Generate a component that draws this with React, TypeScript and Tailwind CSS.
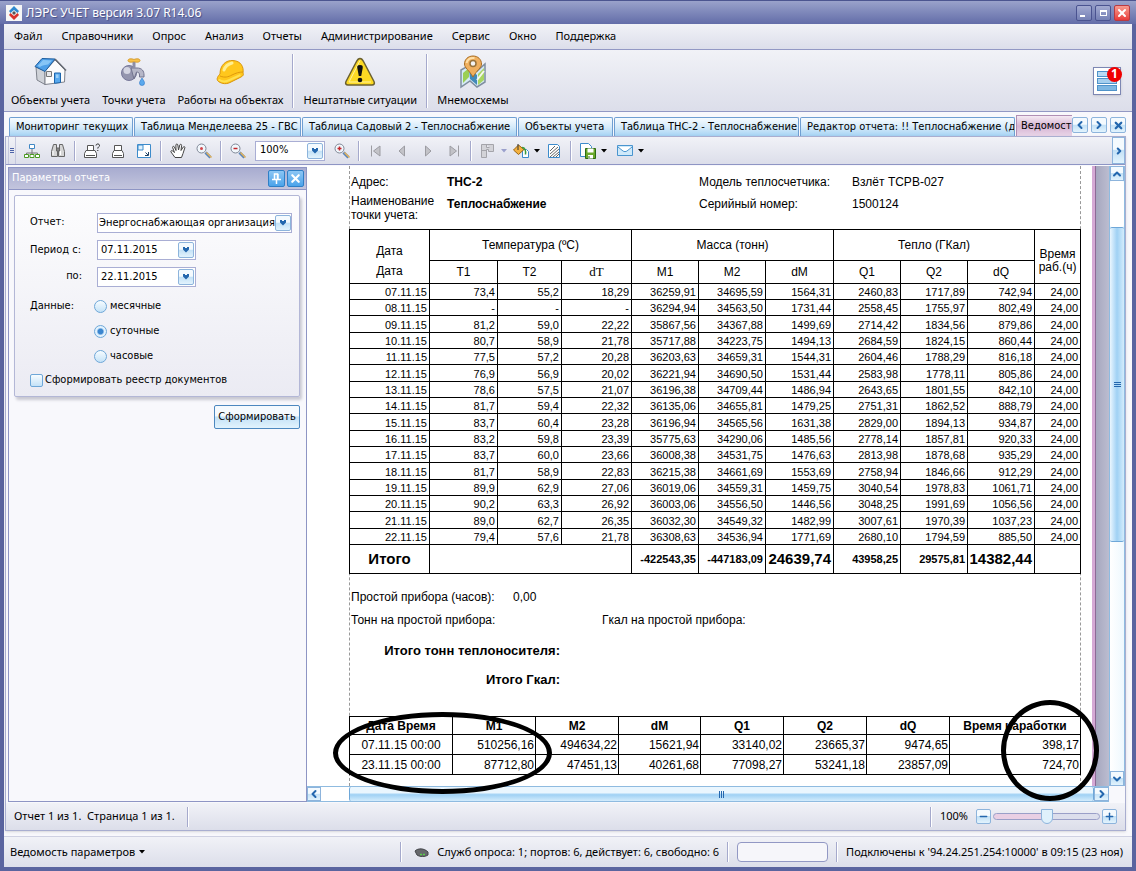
import type { ReactNode } from "react";
import { ChevronLeft, ChevronRight, ChevronUp, ChevronDown, X, Minus, Plus } from "lucide-react";

const menu = ["Файл", "Справочники", "Опрос", "Анализ", "Отчеты", "Администрирование", "Сервис", "Окно", "Поддержка"];

const tabs = [
  { title: "Мониторинг текущих", width: "w-[124px]" },
  { title: "Таблица Менделеева 25 - ГВС", width: "w-[167px]" },
  { title: "Таблица Садовый 2 - Теплоснабжение", width: "w-[215px]" },
  { title: "Объекты учета", width: "w-[95px]" },
  { title: "Таблица ТНС-2 - Теплоснабжение", width: "w-[185px]" },
  { title: "Редактор отчета: !! Теплоснабжение (д", width: "w-[215px]" },
];

const rows = [
  "07.11.15 73,4 55,2 18,29 36259,91 34695,59 1564,31 2460,83 1717,89 742,94 24,00",
  "08.11.15 - - - 36294,94 34563,50 1731,44 2558,45 1755,97 802,49 24,00",
  "09.11.15 81,2 59,0 22,22 35867,56 34367,88 1499,69 2714,42 1834,56 879,86 24,00",
  "10.11.15 80,7 58,9 21,78 35717,88 34223,75 1494,13 2684,59 1824,15 860,44 24,00",
  "11.11.15 77,5 57,2 20,28 36203,63 34659,31 1544,31 2604,46 1788,29 816,18 24,00",
  "12.11.15 76,9 56,9 20,02 36221,94 34690,50 1531,44 2583,98 1778,11 805,86 24,00",
  "13.11.15 78,6 57,5 21,07 36196,38 34709,44 1486,94 2643,65 1801,55 842,10 24,00",
  "14.11.15 81,7 59,4 22,32 36135,06 34655,81 1479,25 2751,31 1862,52 888,79 24,00",
  "15.11.15 83,7 60,4 23,28 36196,94 34565,56 1631,38 2829,00 1894,13 934,87 24,00",
  "16.11.15 83,2 59,8 23,39 35775,63 34290,06 1485,56 2778,14 1857,81 920,33 24,00",
  "17.11.15 83,7 60,0 23,66 36008,38 34531,75 1476,63 2813,98 1878,68 935,29 24,00",
  "18.11.15 81,7 58,9 22,83 36215,38 34661,69 1553,69 2758,94 1846,66 912,29 24,00",
  "19.11.15 89,9 62,9 27,06 36019,06 34559,31 1459,75 3040,54 1978,83 1061,71 24,00",
  "20.11.15 90,2 63,3 26,92 36003,06 34556,50 1446,56 3048,25 1991,69 1056,56 24,00",
  "21.11.15 89,0 62,7 26,35 36032,30 34549,32 1482,99 3007,61 1970,39 1037,23 24,00",
  "22.11.15 79,4 57,6 21,78 36308,63 34536,94 1771,69 2680,10 1794,59 885,50 24,00",
].map((line) => line.split(" "));

const counters = [
  ["07.11.15 00:00", "510256,16", "494634,22", "15621,94", "33140,02", "23665,37", "9474,65", "398,17"],
  ["23.11.15 00:00", "87712,80", "47451,13", "40261,68", "77098,27", "53241,18", "23857,09", "724,70"],
];

const bar = "bg-linear-to-b from-[#f1f2f7] to-[#dcdeea]";
const glass = "border border-[#8db4dc] bg-linear-to-b from-[#f4fafe] from-45% via-[#c3e1f6] via-50% to-[#e2f3fd] text-[#2467ae]";
const uiFont = "font-['Noto_Sans',sans-serif] text-[11px]";
const formFont = "font-['DejaVu_Sans_Condensed','DejaVu_Sans',sans-serif] text-[11px]";

function HouseIcon() {
  return (
    <svg width="34" height="30" viewBox="0 0 34 30">
      <path d="m2 10 9 4v13.500L3 23Z" fill="#cfd2d8" stroke="#7e828c" />
      <path d="M11 14 21 3l10 10-.5 12L11 27.500Z" fill="#fbfbfc" stroke="#7e828c" />
      <path d="M1 9.500 8 1.500l13 .5-10 12.500Z" fill="#4d9fe8" stroke="#1d5d9e" />
      <path d="m3.500 9 5.500-6 9 .5-4 4C10 8 7 9 6 10Z" fill="#86c5f6" />
      <path d="m21 2 11 11.500" stroke="#656972" strokeWidth="1.500" />
      <path d="M12.500 14.500h5v5h-5z" fill="#e8e9ec" stroke="#777" />
      <path d="M20.500 16h6v9.500l-6 .8Z" fill="#58a9ee" stroke="#1d65ac" />
      <path d="M22 17.500h2.500V21H22z" fill="#9dd0f8" />
    </svg>
  );
}

function TapIcon() {
  return (
    <svg width="28" height="30" viewBox="0 0 28 30">
      <circle cx="9" cy="16" r="7.500" fill="#9495ae" stroke="#77789a" />
      <circle cx="7" cy="13.500" r="3.500" fill="#d4d5e2" />
      <path d="M11 11h6c5 0 7 3 7 7v2h-4.500v-2c0-2-1-3-3-3L14 22Z" fill="#b6b7c8" stroke="#73748f" />
      <path d="M12.500 5h3v6h-3z" fill="#8d8ea6" />
      <path d="M8 3.500c0-2 4-2 6-1 2-1 6-1 6 1s-4 2-6 1c-2 1-6 1-6-1Z" fill="#f8c24a" stroke="#d59a2a" />
      <path d="M22 21c2 3 2.500 4 2.500 5a2.500 2.500 0 0 1-5 0c0-1 .5-2 2.500-5Z" fill="#5aa9ee" stroke="#2a76c6" strokeWidth=".6" />
    </svg>
  );
}

function HelmetIcon() {
  return (
    <svg width="30" height="26" viewBox="0 0 30 26">
      <path d="M4 15C4 6 10 1 17 1.500 25 2 28 8 27 14c1 2 0 3-3 4.500l-10 5C9 26 4 24 2 22c-2-2 0-5 2-7Z" fill="#ffc71c" stroke="#d9960c" />
      <path d="M4 17c5 2 8 1 12-1s7-3 11-3" fill="none" stroke="#e09a0c" />
      <path d="M8 11c1-3 4-6 8-7" fill="none" stroke="#ffee90" strokeWidth="3" strokeLinecap="round" />
      <path d="M2.500 20.500c4 3 8 2 11 .5l11-5" fill="none" stroke="#ffe050" strokeWidth="2" />
    </svg>
  );
}

function WarningIcon() {
  return (
    <svg width="32" height="30" viewBox="0 0 32 30">
      <path d="M16 1.500c2 0 2.500 1 3.500 3l10.500 20c1 2 0 3.500-2 3.500H4c-2 0-3-1.500-2-3.500L12.500 4.500c1-2 1.500-3 3.500-3Z" fill="#fcd923" stroke="#6b6030" strokeWidth="1.500" />
      <path d="M16 3.500 5 25h22" fill="none" stroke="#fff3a0" />
      <path d="M16 8c2.500 0 3 1 2.700 3l-1.500 8h-2.400l-1.500-8c-.3-2 .2-3 2.700-3Z" fill="#111" />
      <circle cx="16" cy="23" r="2.300" fill="#111" />
    </svg>
  );
}

function MapIcon() {
  return (
    <svg width="28" height="34" viewBox="0 0 28 34">
      <path d="m2 15 7-4 9 5 8-7v18l-8 5-7-6-9 6Z" fill="#d5eaf5" stroke="#7f8ea0" strokeWidth="1.500" />
      <path d="m4 18 6-5v9l-6 6Z" fill="#9bcf54" />
      <path d="m10 14 8 6v10l-7-6Z" fill="#4289b8" />
      <path d="m19 19 6-6v12l-6 5Z" fill="#a8d661" />
      <path d="m18 25 7-9" stroke="#f6f7ef" strokeWidth="2" />
      <path d="M14 1c5 0 8.500 3.500 8.500 8 0 4-4.500 6-8.500 13C10 15 5.500 13 5.500 9c0-4.500 3.500-8 8.500-8Z" fill="#efaf5f" stroke="#a96d23" />
      <path d="M7.500 8c1-4 4-5.500 8-5" fill="none" stroke="#ffdfa6" strokeWidth="2" />
      <circle cx="14" cy="8.500" r="3" fill="#f4f4f4" stroke="#98733b" strokeWidth="1.500" />
    </svg>
  );
}

const glyphs: Record<string, ReactNode> = {
  tree: (
    <g fill="#fff">
      <path d="M8 6v4M2.500 12v-2h11v2M8 10v2" fill="none" stroke="#777" />
      <path d="M5.500 1.500h5v4h-5z" stroke="#3f87c4" />
      <path d="M.5 11.500h4v3h-4zM6 11.500h4v3H6zM11.500 11.500h4v3h-4z" stroke="#4b9a22" />
    </g>
  ),
  find: (
    <g fill="#d5d5d5" stroke="#666">
      <path d="M3.500 1.500h3v4l1 2v6h-6v-5ZM9.500 1.500h3l2 7v5h-6v-6l1-2Z" />
      <path d="M6.500 5h3v3h-3z" fill="#888" />
      <path d="M3 8v4M10.500 8v4" stroke="#fff" />
    </g>
  ),
  printAsk: (
    <g fill="#fff" stroke="#555">
      <path d="M3.500 7.500v-5h6v5" />
      <path d="M.5 10.500 2 7.500h9l1.500 3v4H.5ZM2 12.500h9" />
      <path d="M12 2.500c0-2 3.500-2 3.500 0 0 1.500-1.700 1.300-1.700 3M13.800 7v1" fill="none" stroke="#222" />
    </g>
  ),
  print: (
    <g fill="#fff" stroke="#555">
      <path d="M4.500 7.500v-5h7v5" />
      <path d="M2.500 10.500 4 7.500h8l1.500 3v4h-11ZM4 12.500h8" />
    </g>
  ),
  scale: (
    <g fill="#fff" stroke="#3c8bcb">
      <path d="M1.500 1.500h13v13h-13z" />
      <path d="M2 2h5v5H2z" fill="#dff1fd" />
      <path d="M9.500 9.500 12 12M12.500 9v3.500H9" stroke="#246" />
    </g>
  ),
  hand: (
    <path d="M5 14.500 1 9c-.5-1 .7-2 1.700-1L4.500 9.500 2.600 4.500c-.3-1.200 1.300-1.700 1.800-.5L6 7.500 5.900 2c0-1.300 1.800-1.300 1.900 0L8.500 7l1.300-5c.3-1.200 2-.8 1.800.4L11 7.500 13.300 4c.7-1 2-.2 1.500.9L13 10.500l-1.500 4Z" fill="#fff" stroke="#444" />
  ),
  zoom: <ZoomGlyph mark="" />,
  zoomOut: <ZoomGlyph mark="M3.500 5.500h4" />,
  zoomIn: <ZoomGlyph mark="M3.500 5.500h4M5.500 3.500v4" />,
  first: <path d="M3.500 2.500v11M12 3v10L5.500 8Z" fill="#c3c3c8" stroke="#9c9ca2" />,
  prev: <path d="M10.500 3v10L5 8Z" fill="#c3c3c8" stroke="#9c9ca2" />,
  next: <path d="M5.500 3v10L11 8Z" fill="#c3c3c8" stroke="#9c9ca2" />,
  last: <path d="M12.500 2.500v11M4 3v10L10.500 8Z" fill="#c3c3c8" stroke="#9c9ca2" />,
  pages: <path d="M1.500 1.500h12v7h-5v-2h-2v8h-5ZM6.500 1.500v3h3M2 7.500h4" fill="#d3d3d8" stroke="#a4a4aa" />,
  fill: (
    <g>
      <path d="M9.500 6.500h4l2 2v6h-6z" fill="#fff" stroke="#3c8bcb" />
      <path d="m.5 7 5-5L11 6.500l-5.500 5Z" fill="#f4b13f" stroke="#9b6512" />
      <path d="M5 1v6" stroke="#333" />
      <path d="M9 4.500c3 0 4 3 3.500 7" fill="none" stroke="#3b9a3b" strokeWidth="1.500" />
    </g>
  ),
  watermark: (
    <g>
      <path d="M2.500 1.500h9l2 2v11h-11z" fill="#fff" stroke="#3c8bcb" />
      <path d="m4 8 5-5M4 11l8-7M4 14l9-8M7 14l6-5M10 14l3-3" stroke="#666" />
    </g>
  ),
  save: (
    <g>
      <path d="M.5.500h8l3 3v10H.5z" fill="#fff" stroke="#3c8bcb" />
      <path d="M5.500 5.500h10v10h-10z" fill="#6aa92c" stroke="#2c6b12" />
      <path d="M7.500 5.500h6v4h-6zM8 12h5v3.500H8z" fill="#fff" />
      <path d="M9 13v2" stroke="#2c6b12" />
    </g>
  ),
  mail: (
    <g>
      <path d="M.5 2.500h15v10H.5z" fill="#cfe9fa" stroke="#4a95cf" />
      <path d="m1 4 5 4c1 .8 3 .8 4 0l5-4" fill="#fff" stroke="#4a95cf" />
    </g>
  ),
};

function ZoomGlyph({ mark }: { mark: string }) {
  return (
    <g fill="none">
      <path d="m9.500 9.500 5 5" stroke="#5b85b8" strokeWidth="3" />
      <path d="m10.500 9.500 5 5" stroke="#e5b35a" strokeWidth="1.500" />
      <circle cx="5.500" cy="5.500" r="4.500" fill="#f1f7fc" stroke="#7f8796" />
      {mark ? <path d={mark} stroke="#c2262b" strokeWidth="1.500" /> : <circle cx="5.500" cy="5.500" r="1.500" fill="#d2474b" />}
    </g>
  );
}

function Tool({ name, label }: { name: string; label: string }) {
  return (
    <button className="flex h-6 w-[26px] shrink-0 items-center justify-center" aria-label={label}>
      <svg width="16" height="16" viewBox="0 0 16 16">{glyphs[name]}</svg>
    </button>
  );
}

function Caret({ muted = false }: { muted?: boolean }) {
  return (
    <svg className="mr-px shrink-0" width="6" height="4" viewBox="0 0 6 4">
      <path d="M0 0h6L3 3.500Z" fill={muted ? "#9aa0cc" : "#000"} />
    </svg>
  );
}

function Sep() {
  return <span className="mx-[3px] h-5 w-[2px] shrink-0 border-l border-[#a5a9cc] bg-white" />;
}

function DropMark() {
  return (
    <span className={`${glass} pointer-events-none flex size-4 shrink-0 items-center justify-center rounded-xs`}>
      <svg width="8" height="6" viewBox="0 0 8 6">
        <path d="M1 0h2v1h2V0h2v2.500L4 5.500 1 2.500Z" fill="currentColor" />
      </svg>
    </span>
  );
}

function PinMark() {
  return (
    <svg width="9" height="11" viewBox="0 0 9 11" fill="none" stroke="#fff">
      <path d="M2.500 6V1h3v5M6 1v5M0 6.500h9M4.500 7v4" strokeWidth="1.500" />
    </svg>
  );
}

function BigButton({ icon, label }: { icon: ReactNode; label: string }) {
  return (
    <button className="flex h-full flex-col items-center justify-between whitespace-nowrap">
      <span className="flex h-9 items-center">{icon}</span>
      <span className="leading-4">{label}</span>
    </button>
  );
}

function TitleBar() {
  return (
    <header className="flex h-6 shrink-0 items-center border-t border-[#4c5590] bg-linear-to-b from-[#9aa2cb] to-[#636da8] px-1.5 font-['Noto_Sans',sans-serif] text-[12px] text-white">
      <svg width="16" height="16" viewBox="0 0 16 16">
        <path d="M0 0h16v16H0z" fill="#f6f6f6" />
        <path d="m8 1 5 5-1.500 2L8 5 4.500 8 3 6Z" fill="#3089cf" />
        <path d="m8 15-5-5 1.500-2L8 11l3.500-3L13 10Z" fill="#d8322c" />
        <path d="m8 6 2 2-2 2-2-2Z" fill="#555" />
      </svg>
      <h1 className="ml-1 flex-1 [text-shadow:1px_1px_1px_#454d85]">ЛЭРС УЧЕТ версия 3.07 R14.06</h1>
      <div className="flex gap-[3px]">
        <button aria-label="Свернуть" className="flex size-4 items-end rounded-xs border border-[#4a5390] bg-linear-to-b from-[#a3aad1] to-[#7580b5] p-[3px]">
          <span className="h-[2px] w-[5px] bg-white" />
        </button>
        <button aria-label="Развернуть" className="flex size-4 items-center justify-center rounded-xs border border-[#4a5390] bg-linear-to-b from-[#a3aad1] to-[#7580b5]">
          <span className="h-[6px] w-[7px] border border-t-2 border-white" />
        </button>
        <button aria-label="Закрыть" className="flex size-4 items-center justify-center rounded-xs border border-[#b93b42] bg-linear-to-b from-[#f79a90] to-[#e8383a]">
          <X size={12} strokeWidth={4} />
        </button>
      </div>
    </header>
  );
}

function TabStrip() {
  return (
    <div className="flex h-[21px] shrink-0 items-end pl-1">
      <div className={`${formFont} flex min-w-0 flex-1 items-end overflow-hidden`}>
        {tabs.map((tab) => (
          <button
            key={tab.title}
            className={`${tab.width} mr-px h-[19px] shrink-0 overflow-hidden rounded-t-xs border border-b-0 border-[#6f9fd2] bg-linear-to-b from-[#f6fbff] via-[#d6ebfa] to-[#a5d3f4] pl-1.5 text-left whitespace-nowrap`}
          >
            {tab.title}
          </button>
        ))}
        <button className="h-[21px] min-w-0 flex-1 overflow-hidden border-t border-l border-[#b08fb4] bg-linear-to-b from-[#f5eaf3] via-[#d5b4d2] to-[#e9d5e8] pl-1 text-left whitespace-nowrap">
          Ведомост
        </button>
      </div>
      <div className="flex gap-[3px] pb-[3px]">
        <button aria-label="Назад" className={`${glass} flex size-4 items-center justify-center rounded-xs`}><ChevronLeft size={12} strokeWidth={4} /></button>
        <button aria-label="Вперёд" className={`${glass} flex size-4 items-center justify-center rounded-xs`}><ChevronRight size={12} strokeWidth={4} /></button>
        <button aria-label="Закрыть вкладку" className={`${glass} flex size-4 items-center justify-center rounded-xs`}><X size={11} strokeWidth={5} /></button>
      </div>
    </div>
  );
}

function PreviewToolbar() {
  return (
    <div className={`${bar} flex h-7 shrink-0 items-center border-b border-[#8e95c4]`}>
      <span className="mr-[3px] ml-[2px] flex h-full w-2 flex-col justify-center gap-px border-x border-[#c3c6dd] px-px">
        <i className="h-px bg-[#4c62a8]" />
        <i className="h-px bg-[#4c62a8]" />
        <i className="h-px bg-[#4c62a8]" />
      </span>
      <Tool name="tree" label="Структура документа" />
      <Tool name="find" label="Поиск" />
      <Sep />
      <Tool name="printAsk" label="Печать" />
      <Tool name="print" label="Быстрая печать" />
      <Tool name="scale" label="Масштаб" />
      <Sep />
      <Tool name="hand" label="Рука" />
      <Tool name="zoom" label="Лупа" />
      <Sep />
      <Tool name="zoomOut" label="Уменьшить" />
      <div className="mx-1 flex h-5 w-[70px] shrink-0 items-center border border-[#a9aed4] bg-white pr-px pl-1">
        <input aria-label="Масштаб просмотра" className={`${formFont} min-w-0 flex-1`} defaultValue="100%" />
        <DropMark />
      </div>
      <Tool name="zoomIn" label="Увеличить" />
      <Sep />
      <Tool name="first" label="Первая страница" />
      <Tool name="prev" label="Предыдущая страница" />
      <Tool name="next" label="Следующая страница" />
      <Tool name="last" label="Последняя страница" />
      <Sep />
      <Tool name="pages" label="Несколько страниц" />
      <Caret muted />
      <Tool name="fill" label="Цвет фона" />
      <Caret />
      <Tool name="watermark" label="Водяной знак" />
      <Sep />
      <Tool name="save" label="Экспорт" />
      <Caret />
      <div className="ml-1 flex items-center">
        <Tool name="mail" label="Отправить" />
        <Caret />
      </div>
      <button aria-label="Ещё" className={`${glass} ml-auto flex h-full w-[13px] items-center justify-center`}><ChevronRight size={10} strokeWidth={5} /></button>
    </div>
  );
}

const pick = "size-[13px] shrink-0 appearance-none border border-[#6ea7d8] bg-linear-to-b from-[#f7fcff] to-[#c4e2f7]";

function ParametersPanel() {
  return (
    <aside className={`${formFont} flex w-[299px] shrink-0 flex-col border border-[#8e95c4] bg-[#f8f8fc]`}>
      <div className="flex h-[22px] items-center gap-[2px] border-b border-[#8e95c4] bg-linear-to-b from-[#a8acd0] to-[#c3c5dd] pr-[2px] pl-[3px] text-white">
        <h2 className="flex-1">Параметры отчета</h2>
        <button aria-label="Закрепить" className="flex size-[17px] items-center justify-center rounded-xs border border-[#2f7fc6] bg-linear-to-b from-[#8cc6f4] to-[#4aa3ea]"><PinMark /></button>
        <button aria-label="Закрыть" className="flex size-[17px] items-center justify-center rounded-xs border border-[#2f7fc6] bg-linear-to-b from-[#8cc6f4] to-[#4aa3ea]"><X size={13} strokeWidth={4} /></button>
      </div>
      <form className="flex flex-col pt-[5px] pr-[6px] pl-[5px]">
        <div className="flex h-[202px] flex-col rounded-xs border border-[#b3b7d6] bg-linear-to-b from-[#fdfdfe] to-[#ebebf3] pt-[17px] pr-[7px] pl-[15px] shadow-[2px_3px_3px_#c9c9d2]">
          <div className="flex h-[27px] items-start">
            <label htmlFor="report" className="w-[67px] pt-px leading-4">Отчет:</label>
            <div className="relative flex-1">
              <select id="report" className="h-5 w-full appearance-none border border-[#a9aed4] bg-white pl-px">
                <option>Энергоснабжающая организация</option>
              </select>
              <span className="pointer-events-none absolute top-[2px] right-px"><DropMark /></span>
            </div>
          </div>
          <div className="flex h-[27px] items-start">
            <label htmlFor="from" className="w-[67px] pt-[2px] leading-4">Период с:</label>
            <div className="flex h-5 w-[99px] items-center border border-[#a9aed4] bg-white pr-px pl-[3px]">
              <input id="from" className="min-w-0 flex-1" defaultValue="07.11.2015" />
              <DropMark />
            </div>
          </div>
          <div className="flex h-[27px] items-start">
            <label htmlFor="to" className="w-[67px] pt-px pr-[15px] text-right leading-4">по:</label>
            <div className="flex h-5 w-[99px] items-center border border-[#a9aed4] bg-white pr-px pl-[3px]">
              <input id="to" className="min-w-0 flex-1" defaultValue="22.11.2015" />
              <DropMark />
            </div>
          </div>
          <fieldset className="flex pt-1">
            <legend className="float-left w-16 leading-4">Данные:</legend>
            <div className="flex flex-col gap-[9px]">
              <label className="flex h-4 items-center gap-[3px]"><input type="radio" name="kind" className={`${pick} rounded-full`} />месячные</label>
              <label className="flex h-4 items-center gap-[3px]"><input type="radio" name="kind" defaultChecked className={`${pick} rounded-full checked:bg-radial checked:from-[#3b86cf] checked:from-30% checked:to-[#e2f2fd] checked:to-50%`} />суточные</label>
              <label className="flex h-4 items-center gap-[3px]"><input type="radio" name="kind" className={`${pick} rounded-full`} />часовые</label>
            </div>
          </fieldset>
          <label className="mt-2 flex h-4 items-center gap-[2px]"><input type="checkbox" className={`${pick} rounded-xs`} />Сформировать реестр документов</label>
        </div>
        <button type="button" className="mt-2 h-6 w-[86px] self-end rounded-xs border border-[#4d88bf] bg-linear-to-b from-[#f5fafe] from-45% via-[#c3e1f6] via-50% to-[#e2f3fd]">
          Сформировать
        </button>
      </form>
    </aside>
  );
}

const headCell = "border border-black text-center font-normal";

function MainTable() {
  return (
    <table className="w-full table-fixed border-collapse text-[11px] leading-3">
      <colgroup>
        <col className="w-[80px]" />
        <col className="w-[68px]" />
        <col className="w-[64px]" />
        <col className="w-[70px]" />
        <col className="w-[67px]" />
        <col className="w-[67px]" />
        <col className="w-[68px]" />
        <col className="w-[67px]" />
        <col className="w-[67px]" />
        <col className="w-[67px]" />
        <col className="w-[46px]" />
      </colgroup>
      <thead className="text-[12px]">
        <tr className="h-[31px]">
          <th rowSpan={2} className={`${headCell} pt-2 leading-5`}>Дата<br />Дата</th>
          <th colSpan={3} className={headCell}>Температура (ºС)</th>
          <th colSpan={3} className={headCell}>Масса (тонн)</th>
          <th colSpan={3} className={headCell}>Тепло (ГКал)</th>
          <th rowSpan={2} className={`${headCell} pt-2 leading-[13px]`}>Время раб.(ч)</th>
        </tr>
        <tr className="h-[23px]">
          <th className={headCell}>T1</th>
          <th className={headCell}>T2</th>
          <th className={`${headCell} font-['Liberation_Serif',serif] text-[13px]`}>dT</th>
          {["М1", "М2", "dM", "Q1", "Q2", "dQ"].map((name) => (
            <th key={name} className={headCell}>{name}</th>
          ))}
        </tr>
      </thead>
      <tbody>
        {rows.map((row, i) => (
          <tr key={row[0]} className={i % 3 === 2 ? "h-[17px]" : "h-4"}>
            {row.map((value, j) => (
              <td key={j} className="border border-black pt-px pr-[2px] text-right">{value}</td>
            ))}
          </tr>
        ))}
        <tr className="h-[29px] text-right font-bold">
          <td className="border border-black text-center text-[15px]">Итого</td>
          <td colSpan={3} className="border border-black" />
          <td className="border border-black pr-[2px]">-422543,35</td>
          <td className="border border-black pr-[2px]">-447183,09</td>
          <td className="border border-black pr-[2px] text-[15px]">24639,74</td>
          <td className="border border-black pr-[2px]">43958,25</td>
          <td className="border border-black pr-[2px]">29575,81</td>
          <td className="border border-black pr-[2px] text-[15px]">14382,44</td>
          <td className="border border-black" />
        </tr>
      </tbody>
    </table>
  );
}

function CounterTable() {
  return (
    <div className="relative">
      <table className="w-full table-fixed border-collapse text-[12px] leading-4">
        <colgroup>
          <col className="w-[103px]" />
          <col className="w-[83px]" />
          <col className="w-[83px]" />
          <col className="w-[82px]" />
          <col className="w-[83px]" />
          <col className="w-[83px]" />
          <col className="w-[83px]" />
          <col className="w-[131px]" />
        </colgroup>
        <thead>
          <tr className="h-[18px]">
            {["Дата Время", "М1", "М2", "dM", "Q1", "Q2", "dQ", "Время наработки"].map((name) => (
              <th key={name} className="border border-black text-center">{name}</th>
            ))}
          </tr>
        </thead>
        <tbody>
          {counters.map((row) => (
            <tr key={row[0]} className="h-5">
              {row.map((value, j) => (
                <td key={j} className={j === 0 ? "border border-black text-center" : "border border-black pr-px text-right"}>{value}</td>
              ))}
            </tr>
          ))}
        </tbody>
      </table>
      <span className="absolute -top-1 -left-4 z-10 h-[82px] w-[219px] rounded-[50%] border-5 border-black" />
      <span className="absolute -top-4 -right-[18px] z-10 h-[101px] w-[98px] rounded-[50%] border-5 border-black" />
    </div>
  );
}

function Report() {
  return (
    <article className="ml-[42px] flex-1 pr-[11px] font-['Liberation_Sans',Arial,sans-serif] text-[12px]">
      <div className="border-x border-dashed border-[#999] pb-[11px]">
        <dl className="grid grid-cols-[96px_252px_153px_1fr] gap-y-1 px-px pt-2 leading-[14px]">
          <dt className="pt-px">Адрес:</dt>
          <dd className="pt-px font-bold">ТНС-2</dd>
          <dt className="pt-px">Модель теплосчетчика:</dt>
          <dd className="pt-px">Взлёт ТСРВ-027</dd>
          <dt className="pt-px">Наименование точки учета:</dt>
          <dd className="pt-1 font-bold">Теплоснабжение</dd>
          <dt className="pt-1">Серийный номер:</dt>
          <dd className="pt-1">1500124</dd>
        </dl>
        <div className="-mx-px mt-[7px]">
          <MainTable />
        </div>
        <div className="px-px leading-4">
          <div className="mt-[15px] flex">
            <p className="w-[162px]">Простой прибора (часов):</p>
            <p>0,00</p>
          </div>
          <div className="mt-[7px] flex">
            <p className="w-[251px]">Тонн на простой прибора:</p>
            <p>Гкал на простой прибора:</p>
          </div>
          <div className="w-[209px] text-right text-[13px] font-bold whitespace-nowrap">
            <p className="mt-[15px]">Итого тонн теплоносителя:</p>
            <p className="mt-[13px]">Итого Гкал:</p>
          </div>
        </div>
        <div className="-mx-px mt-7">
          <CounterTable />
        </div>
      </div>
    </article>
  );
}

function Viewer() {
  return (
    <section className="flex min-w-0 flex-1 flex-col">
      <div className="flex flex-1">
        <div className="flex flex-1 bg-white">
          <Report />
        </div>
        <div className="w-[4px] border-r border-[#8d6b96] bg-[#d5a9d5]" />
        <div className="w-[13px] bg-linear-to-r from-[#a6a7bf] to-[#bcbdd0]" />
        <div className="flex w-4 flex-col border-x border-[#8fbbe0] bg-[#e8f5fd]">
          <span className={`${glass} flex h-[15px] items-center justify-center`}><ChevronUp size={12} strokeWidth={4} className="shrink-0" /></span>
          <span className="h-[46px] rounded-xs bg-white" />
          <span className="flex h-[315px] items-center justify-center rounded-xs border-y border-[#6ea7d8] bg-linear-to-r from-[#eaf6fe] via-[#9fd1f4] to-[#d3ecfc]">
            <svg width="7" height="7" viewBox="0 0 7 7"><path d="M0 1.500h7M0 3.500h7M0 5.500h7" stroke="#2467ae" /></svg>
          </span>
          <span className="flex-1 bg-linear-to-r from-white to-[#eef8fe]" />
          <span className={`${glass} flex h-[15px] items-center justify-center`}><ChevronDown size={12} strokeWidth={4} className="shrink-0" /></span>
        </div>
      </div>
      <div className="mr-4 flex h-4 border-y border-[#8fbbe0] bg-[#eef8fe]">
        <span className={`${glass} flex w-[14px] items-center justify-center`}><ChevronLeft size={12} strokeWidth={4} className="shrink-0" /></span>
        <span className="w-7 bg-white" />
        <span className="flex flex-1 items-center justify-center rounded-xs border-x border-[#6ea7d8] bg-linear-to-b from-[#eaf6fe] from-40% via-[#9fd1f4] via-55% to-[#d3ecfc]">
          <svg width="7" height="7" viewBox="0 0 7 7"><path d="M1.500 0v7M3.500 0v7M5.500 0v7" stroke="#2467ae" /></svg>
        </span>
        <span className={`${glass} flex w-[15px] items-center justify-center`}><ChevronRight size={12} strokeWidth={4} className="shrink-0" /></span>
      </div>
    </section>
  );
}

export default function App() {
  return (
    <div className="flex min-h-screen flex-col border-x-4 border-b-4 border-[#5a649f] bg-[#f8f8fc] text-black">
      <div className="-mx-1 flex flex-col">
        <TitleBar />
      </div>
      <div className={`${uiFont} flex flex-1 flex-col`}>
        <nav className={`${bar} flex h-[26px] shrink-0 items-center gap-[19px] border-b border-[#9298c4] pl-[10px]`}>
          {menu.map((item) => (
            <button key={item}>{item}</button>
          ))}
        </nav>
        <div className={`${bar} flex h-[62px] shrink-0 items-center border-b border-[#9298c4] pr-1.5 pl-[7px]`}>
          <div className="flex h-[54px] gap-3">
            <BigButton icon={<HouseIcon />} label="Объекты учета" />
            <BigButton icon={<TapIcon />} label="Точки учета" />
            <BigButton icon={<HelmetIcon />} label="Работы на объектах" />
          </div>
          <span className="mx-[9px] h-[54px] w-[2px] border-l border-[#a5a9cc] bg-white" />
          <div className="h-[54px]">
            <BigButton icon={<WarningIcon />} label="Нештатные ситуации" />
          </div>
          <span className="mx-[9px] h-[54px] w-[2px] border-l border-[#a5a9cc] bg-white" />
          <div className="h-[54px]">
            <BigButton icon={<MapIcon />} label="Мнемосхемы" />
          </div>
          <button aria-label="Уведомления" className="relative mr-[5px] ml-auto flex size-7 flex-col justify-center gap-px border border-[#7d87b3] bg-white px-[3px] shadow">
            <span className="h-[6px] border border-[#4f93c9] bg-[#b9dbf3]" />
            <span className="h-[6px] border border-[#4f93c9] bg-[#a4cfee]" />
            <span className="h-[6px] border border-[#4f93c9] bg-[#7db7e2]" />
            <span className="absolute -top-px -right-[2px] flex size-[15px] items-center justify-center rounded-full bg-[#f00000] text-[12px] font-bold text-white">1</span>
          </button>
        </div>
        <div className="flex flex-1 flex-col pt-[3px] pr-[6px] pl-px">
          <TabStrip />
          <div className="flex flex-1 flex-col border border-[#a9aed0] shadow">
            <PreviewToolbar />
            <div className="flex flex-1 pt-px pl-[2px]">
              <div className="flex pt-px">
                <ParametersPanel />
              </div>
              <Viewer />
            </div>
            <footer className={`${bar} mt-px flex h-[27px] shrink-0 items-center pr-2 pl-2`}>
              <span className="whitespace-pre">Отчет 1 из 1.  Страница 1 из 1.</span>
              <span className="ml-3 h-5 w-[2px] border-l border-[#a5a9cc] bg-white" />
              <span className="ml-auto h-5 w-[2px] border-l border-[#a5a9cc] bg-white" />
              <label htmlFor="zoom" className="mr-2 ml-2">100%</label>
              <button aria-label="Мельче" className={`${glass} flex size-[15px] items-center justify-center rounded-xs`}><Minus size={11} strokeWidth={3} /></button>
              <input
                id="zoom"
                type="range"
                className="mx-[2px] h-4 w-[107px] appearance-none bg-transparent [&::-webkit-slider-runnable-track]:h-[7px] [&::-webkit-slider-runnable-track]:rounded-full [&::-webkit-slider-runnable-track]:border [&::-webkit-slider-runnable-track]:border-[#9a9fc8] [&::-webkit-slider-runnable-track]:bg-linear-to-r [&::-webkit-slider-runnable-track]:from-[#e9cfe4] [&::-webkit-slider-runnable-track]:from-50% [&::-webkit-slider-runnable-track]:to-[#dcdeec] [&::-webkit-slider-runnable-track]:to-50% [&::-webkit-slider-thumb]:-mt-[5px] [&::-webkit-slider-thumb]:h-[15px] [&::-webkit-slider-thumb]:w-3 [&::-webkit-slider-thumb]:appearance-none [&::-webkit-slider-thumb]:rounded-t-xs [&::-webkit-slider-thumb]:rounded-b-full [&::-webkit-slider-thumb]:border [&::-webkit-slider-thumb]:border-[#8db4dc] [&::-webkit-slider-thumb]:bg-[#dff1fc]"
              />
              <button aria-label="Крупнее" className={`${glass} flex size-[15px] items-center justify-center rounded-xs`}><Plus size={11} strokeWidth={3} /></button>
            </footer>
          </div>
        </div>
        <footer className={`${bar} mt-[5px] flex h-[31px] shrink-0 items-center border-t border-[#cfd1e2] pr-[9px] pl-1.5 whitespace-nowrap`}>
          <button className="flex items-center gap-1">Ведомость параметров <Caret /></button>
          <span className="ml-auto h-5 w-[2px] border-l border-[#a5a9cc] bg-white" />
          <svg className="mr-2 ml-3" width="15" height="9" viewBox="0 0 15 9">
            <path d="M1 3c3-3 9-3 13 1v3c-3 2-8 2-11 0Z" fill="#66686c" stroke="#44464a" />
            <path d="M6 6.500h2M9 6.500h2" stroke="#5bd04c" strokeWidth="1.500" />
          </svg>
          <span>Служб опроса: 1; портов: 6, действует: 6, свободно: 6</span>
          <span className="mx-2 h-5 w-[2px] border-l border-[#a5a9cc] bg-white" />
          <span className="h-5 w-[91px] rounded border border-[#9298c4] bg-[#f6f6fa]" />
          <span className="mx-2 h-5 w-[2px] border-l border-[#a5a9cc] bg-white" />
          <span>Подключены к '94.24.251.254:10000' в 09:15 (23 ноя)</span>
        </footer>
      </div>
    </div>
  );
}
